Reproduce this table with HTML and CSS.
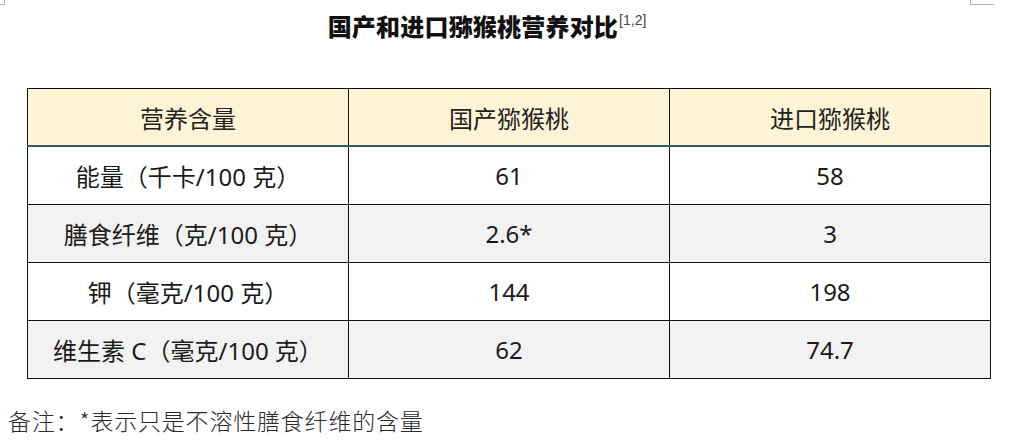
FILE: index.html
```html
<!DOCTYPE html>
<html lang="zh-CN">
<head>
<meta charset="utf-8">
<title>国产和进口猕猴桃营养对比</title>
<link rel="stylesheet" href="styles.css">
</head>
<body>
<span class="mark mark-left"></span>
<span class="mark mark-right"></span>
<h1 class="title">国产和进口猕猴桃营养对比<sup class="ref">[1,2]</sup></h1>
<table class="nutri">
  <thead>
    <tr><th>营养含量</th><th>国产猕猴桃</th><th>进口猕猴桃</th></tr>
  </thead>
  <tbody>
    <tr><td>能量（千卡/100 克）</td><td>61</td><td>58</td></tr>
    <tr class="alt"><td>膳食纤维（克/100 克）</td><td>2.6*</td><td>3</td></tr>
    <tr><td>钾（毫克/100 克）</td><td>144</td><td>198</td></tr>
    <tr class="alt"><td>维生素 C（毫克/100 克）</td><td>62</td><td>74.7</td></tr>
  </tbody>
</table>
<p class="note">备注：*表示只是不溶性膳食纤维的含量</p>
</body>
</html>
```
FILE: styles.css
```css
html, body {
  margin: 0;
  padding: 0;
  background: #ffffff;
}
body {
  position: relative;
  width: 1009px;
  height: 447px;
  overflow: hidden;
  font-family: "Noto Sans", "Noto Sans CJK SC", sans-serif;
  color: #1a1a1a;
}
.mark {
  position: absolute;
  top: 0;
  height: 4px;
  border-color: #b5b5b5;
  border-style: solid;
}
.mark-left {
  left: 0;
  width: 4px;
  border-width: 0 1px 1px 0;
}
.mark-right {
  left: 970px;
  width: 23px;
  border-width: 0 0 1px 1px;
}
.title {
  margin: 0;
  padding: 10px 35px 0 0;
  height: 32px;
  line-height: 32px;
  text-align: center;
  font-family: "Noto Sans CJK SC", sans-serif;
  font-weight: 900;
  font-size: 24px;
  color: #111;
  letter-spacing: 0.2px;
}
.ref {
  font-family: "Liberation Sans", sans-serif;
  font-weight: 400;
  font-size: 14px;
  color: #444;
  vertical-align: 11px;
  line-height: 0;
  margin-left: 1px;
  letter-spacing: 0;
}
.nutri {
  margin: 46px 0 0 27px;
  width: 964px;
  border-collapse: collapse;
  table-layout: fixed;
  font-family: "Noto Sans", "Noto Sans CJK SC", sans-serif;
  font-size: 24px;
  color: #1a1a1a;
}
.nutri th,
.nutri td {
  border: 1px solid #111;
  text-align: center;
  vertical-align: middle;
  height: 57px;
  padding: 0;
  font-weight: 400;
}
.nutri thead th {
  background: #fff4d6;
  border-bottom: 2px solid #2d5a66;
  height: 56px;
  color: #222;
}
.nutri tr.alt td {
  background: #f2f2f2;
}
.note {
  margin: 26px 0 0 8px;
  font-family: "Noto Sans CJK SC", serif;
  font-size: 23px;
  font-weight: 300;
  line-height: 30px;
  color: #2a2a2a;
  letter-spacing: 0.8px;
}
```
